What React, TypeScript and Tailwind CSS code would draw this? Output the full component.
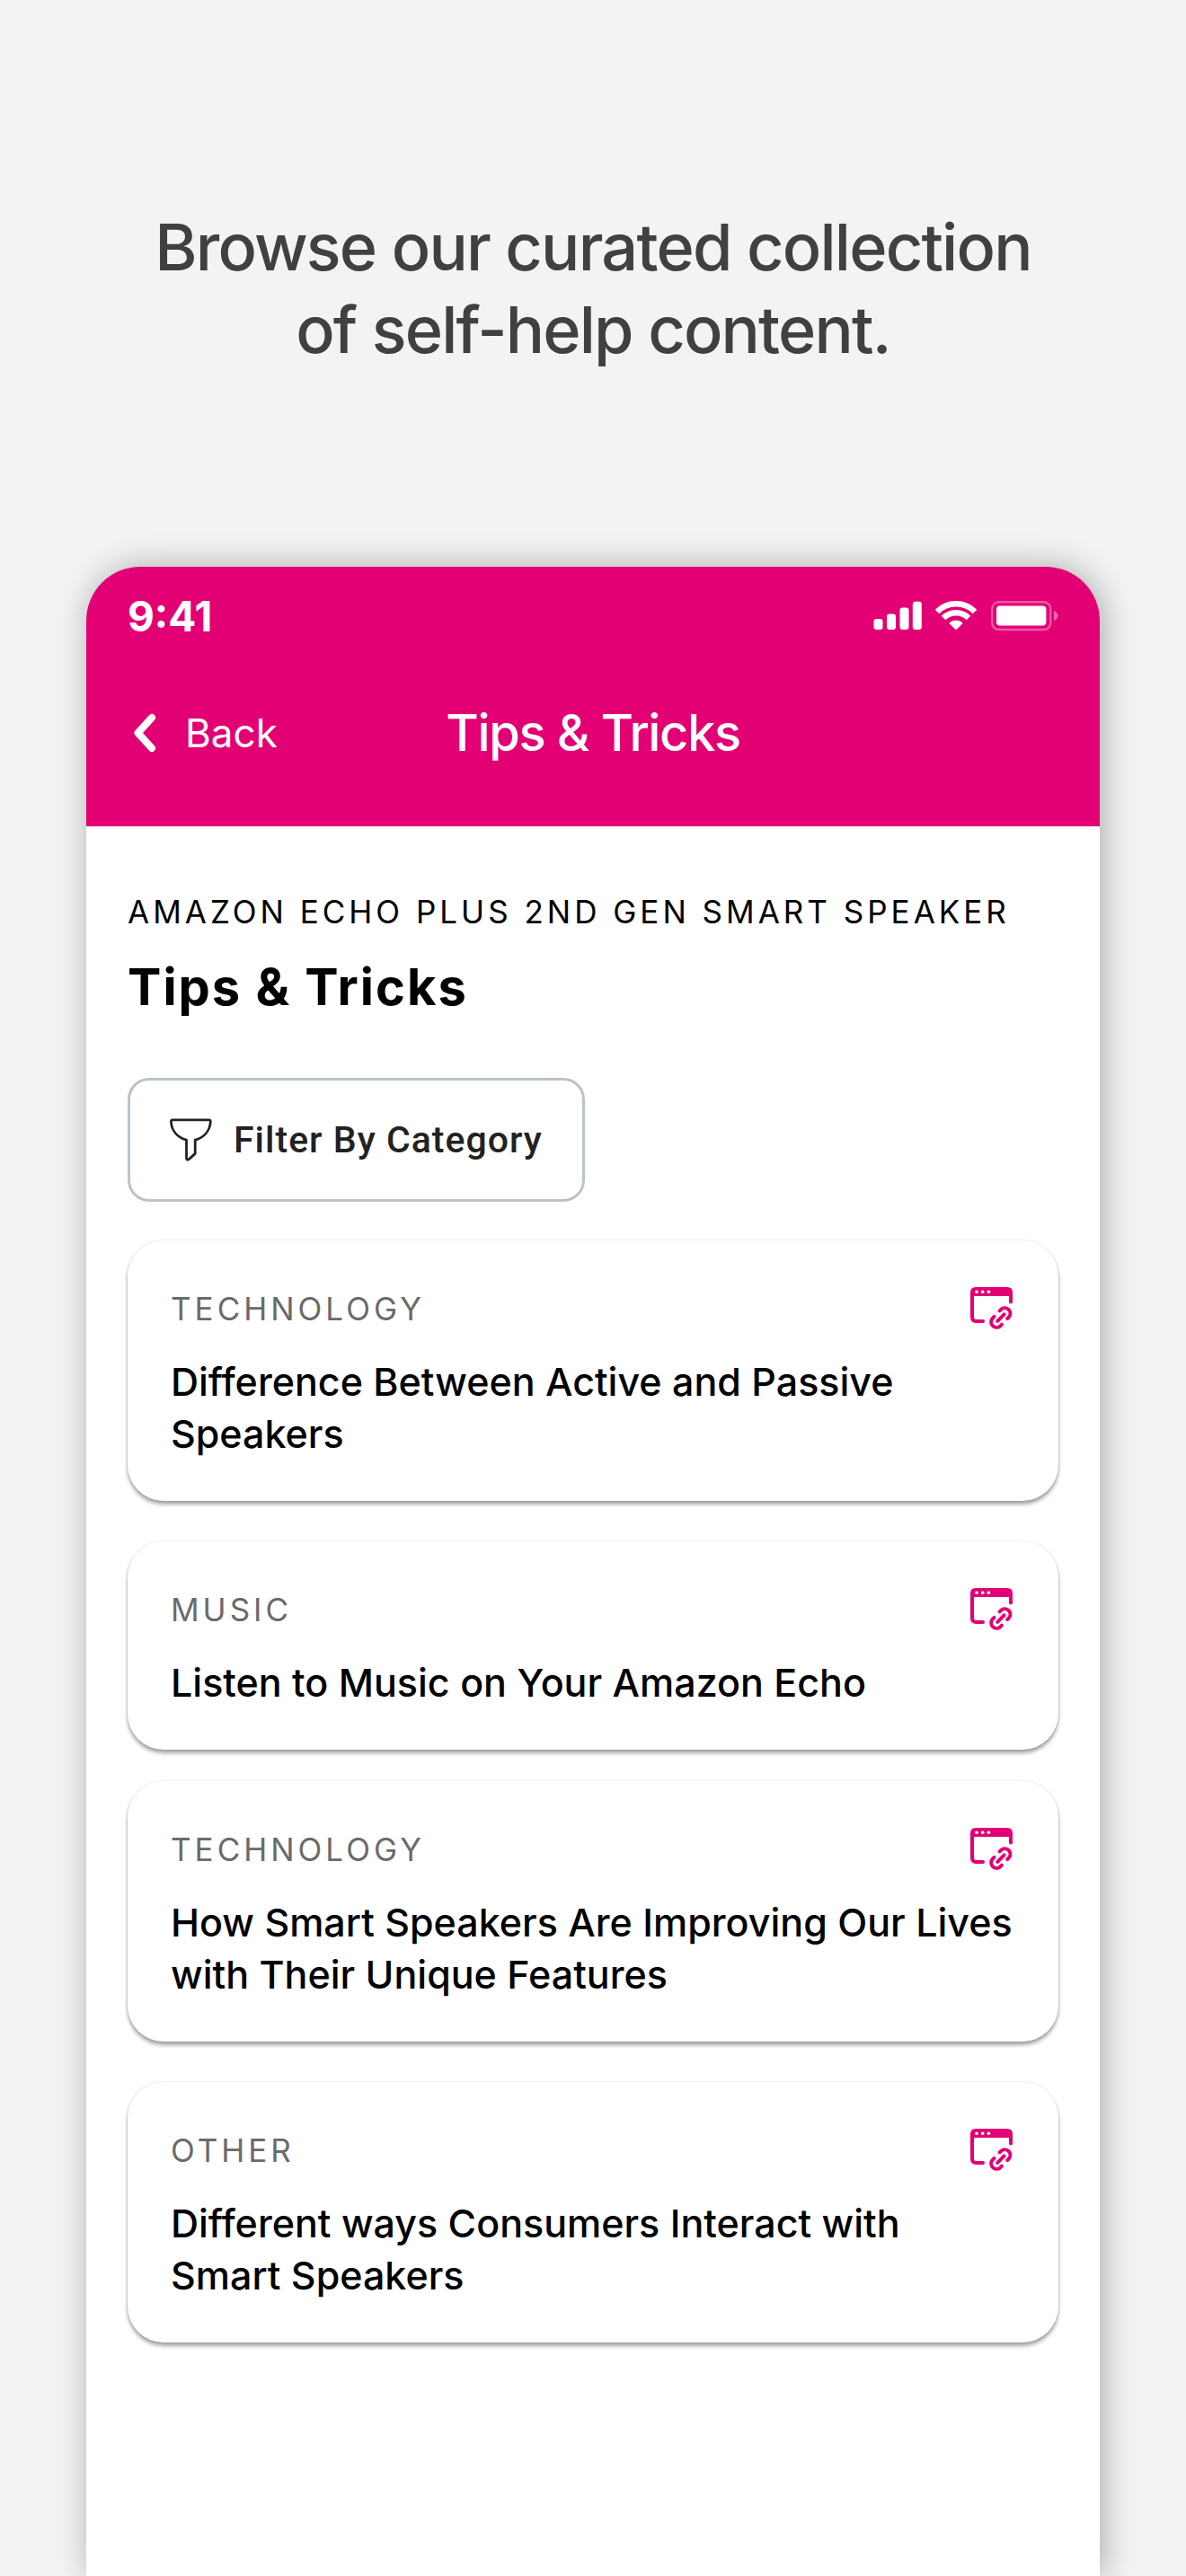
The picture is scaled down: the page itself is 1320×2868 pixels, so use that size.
type Tip = {
  category: string;
  title: string;
  spacing: string;
};

const tips: Tip[] = [
  {
    category: "Technology",
    title: "Difference Between Active and Passive Speakers",
    spacing: "mt-[43px]",
  },
  {
    category: "Music",
    title: "Listen to Music on Your Amazon Echo",
    spacing: "mt-[45px]",
  },
  {
    category: "Technology",
    title: "How Smart Speakers Are Improving Our Lives with Their Unique Features",
    spacing: "mt-[35px]",
  },
  {
    category: "Other",
    title: "Different ways Consumers Interact with Smart Speakers",
    spacing: "mt-[45px]",
  },
];

function StatusIcons() {
  return (
    <svg width="206" height="34" viewBox="0 0 206 34" fill="white" aria-hidden="true">
      {/* Signal */}
      <rect x="0.5" y="20" width="10" height="12" rx="3" />
      <rect x="15" y="14.5" width="10" height="17.5" rx="3" />
      <rect x="29.5" y="7.5" width="10" height="24.5" rx="3" />
      <rect x="43.8" y="0.8" width="10" height="31.2" rx="3" />
      {/* Wifi */}
      <g fill="none" stroke="white" strokeWidth="6.4">
        <path d="M71 12A29.7 29.7 0 0 1 113 12" />
        <path d="M78 19.1A19.7 19.7 0 0 1 106 19.1" />
      </g>
      <path d="M91.2 31.7L84.9 25.4Q84.3 24.6 85 24A11 11 0 0 1 99 24Q99.7 24.6 99.1 25.4L92.8 31.7Q92 32.4 91.2 31.7Z" />
      {/* Battery */}
      <rect x="132.2" y="1.2" width="65" height="30.8" rx="7.5" fill="none" stroke="white" strokeOpacity="0.35" strokeWidth="2.4" />
      <rect x="137" y="5.6" width="55.4" height="21.8" rx="4" />
      <path d="M201 11C203.6 12 205.4 14 205.4 16.6C205.4 19.2 203.6 21.2 201 22.2Z" fillOpacity="0.4" />
    </svg>
  );
}

function FunnelIcon() {
  return (
    <svg
      width="47"
      height="48"
      viewBox="0 0 47 48"
      fill="none"
      stroke="#222222"
      strokeWidth="2.8"
      strokeLinejoin="round"
      aria-hidden="true"
    >
      <path d="M3 1.8H43.6Q45.4 1.8 45.3 4C44.6 13.6 38.5 21.2 28.2 24.2V39.4L21.6 45.4Q18.5 47.6 18.5 44.2V24.2C8.2 21.2 2 13.6 1.4 4Q1.3 1.8 3 1.8Z" />
    </svg>
  );
}

function WebLinkIcon() {
  return (
    <svg width="48" height="48" viewBox="0 0 48 48" className="shrink-0" fill="none" aria-hidden="true">
      <path d="M6 0H41Q47 0 47 6V10H0V6Q0 0 6 0Z" fill="#E20074" />
      <g stroke="#E20074" strokeWidth="4" strokeLinecap="round">
        <path d="M2 8V33.5Q2 38 6.4 38H14" />
        <path d="M45 8V16.6" />
        <path d="M32.6 26.4L34.3 24.7A6.1 6.1 0 0 1 42.9 33.3L41.2 35" />
        <path d="M26.5 32.9L24.6 34.8A6.1 6.1 0 0 0 33.2 43.4L34.9 41.7" />
        <path d="M30.2 37.8L37.6 30.4" />
      </g>
      <g fill="white">
        <circle cx="7" cy="5.3" r="1.8" />
        <circle cx="13.7" cy="5.3" r="1.8" />
        <circle cx="20.4" cy="5.3" r="1.8" />
      </g>
    </svg>
  );
}

function TipCard({ tip }: { tip: Tip }) {
  return (
    <li className={tip.spacing}>
      <a
        href="#"
        className="block rounded-[40px] bg-white px-12 pt-[52px] pb-[46px] shadow-[0_4px_4px_rgba(0,0,0,0.35),0_0_3px_rgba(0,0,0,0.12)]"
      >
        <div className="flex items-center justify-between pr-0.5">
          <span className="text-[35px] leading-[48px] tracking-[4px] text-[#6a6a6a] uppercase">
            {tip.category}
          </span>
          <WebLinkIcon />
        </div>
        <h3 className="mt-7 text-[43px] leading-[58px] font-medium text-black">{tip.title}</h3>
      </a>
    </li>
  );
}

export default function App() {
  return (
    <div className="flex min-h-screen flex-col overflow-hidden bg-[#f3f3f3] px-24 pt-[229px] font-['Inter',sans-serif]">
      <h1 className="text-center text-[72px] leading-[92px] font-medium tracking-tight text-[#404040]">
        Browse our curated collection
        <br />
        of self-help content.
      </h1>

      <div className="mt-[218px] flex-1 rounded-t-[60px] bg-white shadow-[4px_0_36px_rgba(0,0,0,0.3)]">
        <header className="rounded-t-[60px] bg-[#e20074] px-[46px] pb-[29px] text-white">
          <div className="flex h-[110px] items-center justify-between">
            <span className="text-[46px] leading-[52px] font-bold">9:41</span>
            <StatusIcons />
          </div>
          <nav className="grid h-[150px] grid-cols-[1fr_auto_1fr] items-center">
            <button type="button" className="flex items-center gap-8 justify-self-start pl-1.5 text-[44px] leading-[52px]">
              <svg width="26" height="44" viewBox="0 0 26 44" fill="none" aria-hidden="true">
                <path d="M21 5L5.5 22L21 39" stroke="white" strokeWidth="8" strokeLinecap="round" strokeLinejoin="round" />
              </svg>
              Back
            </button>
            <span className="text-[56px] leading-[64px] font-medium tracking-tight">Tips &amp; Tricks</span>
          </nav>
        </header>

        <main className="px-[46px] pt-[75px] pb-24">
          <p className="text-[35px] leading-10 tracking-[4px] text-black uppercase">
            Amazon Echo Plus 2nd Gen Smart Speaker
          </p>
          <h2 className="mt-8 text-[56px] leading-[64px] font-bold tracking-[2px] text-black">Tips &amp; Tricks</h2>

          <button
            type="button"
            className="mt-[69px] flex h-[138px] items-center gap-6 rounded-[24px] border-3 border-[#bac4c8] px-[44px] font-['Roboto',sans-serif] text-[41px] leading-[48px] font-medium tracking-[1px] text-[#222222]"
          >
            <FunnelIcon />
            Filter By Category
          </button>

          <ul>
            {tips.map((tip) => (
              <TipCard key={tip.title} tip={tip} />
            ))}
          </ul>
        </main>
      </div>
    </div>
  );
}
